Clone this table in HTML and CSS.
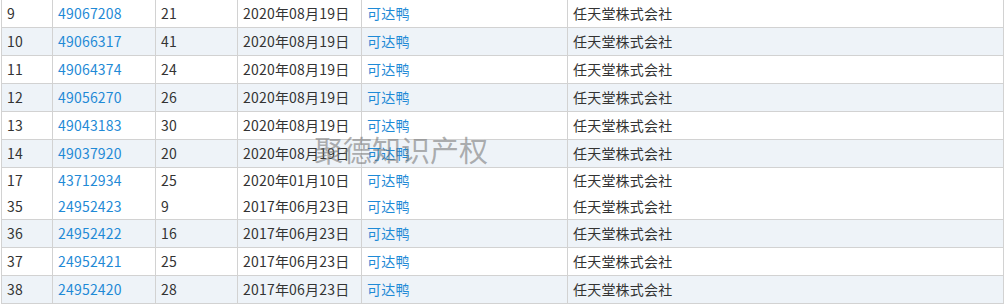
FILE: index.html
```html
<!DOCTYPE html>
<html lang="zh-CN">
<head>
<meta charset="utf-8">
<title>商标列表</title>
<link rel="stylesheet" href="styles.css">
</head>
<body>
<div class="wrap">
<table class="tm-table">
  <colgroup>
    <col class="c-no"><col class="c-reg"><col class="c-cls"><col class="c-date"><col class="c-name"><col class="c-owner">
  </colgroup>
  <tbody>
    <tr><td>9</td><td><a href="#">49067208</a></td><td>21</td><td>2020年08月19日</td><td><a href="#">可达鸭</a></td><td>任天堂株式会社</td></tr>
    <tr class="alt"><td>10</td><td><a href="#">49066317</a></td><td>41</td><td>2020年08月19日</td><td><a href="#">可达鸭</a></td><td>任天堂株式会社</td></tr>
    <tr><td>11</td><td><a href="#">49064374</a></td><td>24</td><td>2020年08月19日</td><td><a href="#">可达鸭</a></td><td>任天堂株式会社</td></tr>
    <tr class="alt"><td>12</td><td><a href="#">49056270</a></td><td>26</td><td>2020年08月19日</td><td><a href="#">可达鸭</a></td><td>任天堂株式会社</td></tr>
    <tr><td>13</td><td><a href="#">49043183</a></td><td>30</td><td>2020年08月19日</td><td><a href="#">可达鸭</a></td><td>任天堂株式会社</td></tr>
    <tr class="alt"><td>14</td><td><a href="#">49037920</a></td><td>20</td><td>2020年08月19日</td><td><a href="#">可达鸭</a></td><td>任天堂株式会社</td></tr>
    <tr class="double">
      <td><div>17</div><div>35</div></td>
      <td><div><a href="#">43712934</a></div><div><a href="#">24952423</a></div></td>
      <td><div>25</div><div>9</div></td>
      <td><div>2020年01月10日</div><div>2017年06月23日</div></td>
      <td><div><a href="#">可达鸭</a></div><div><a href="#">可达鸭</a></div></td>
      <td><div>任天堂株式会社</div><div>任天堂株式会社</div></td>
    </tr>
    <tr class="alt"><td>36</td><td><a href="#">24952422</a></td><td>16</td><td>2017年06月23日</td><td><a href="#">可达鸭</a></td><td>任天堂株式会社</td></tr>
    <tr><td>37</td><td><a href="#">24952421</a></td><td>25</td><td>2017年06月23日</td><td><a href="#">可达鸭</a></td><td>任天堂株式会社</td></tr>
    <tr class="alt"><td>38</td><td><a href="#">24952420</a></td><td>28</td><td>2017年06月23日</td><td><a href="#">可达鸭</a></td><td>任天堂株式会社</td></tr>
  </tbody>
</table>
<div class="watermark">聚德知识产权</div>
</div>
</body>
</html>
```

FILE: styles.css
```css
html, body {
  margin: 0;
  padding: 0;
  background: #ffffff;
}

.wrap {
  position: relative;
  width: 1004px;
  height: 304px;
  overflow: hidden;
}

.tm-table {
  border-collapse: collapse;
  table-layout: fixed;
  width: 1002px;
  margin: -1px 0 0 1px;
  font-family: "Noto Sans CJK SC", "Liberation Sans", sans-serif;
  font-size: 14px;
  color: #333333;
}

.c-no { width: 51px; }
.c-reg { width: 103px; }
.c-cls { width: 82px; }
.c-date { width: 124px; }
.c-name { width: 206px; }
.c-owner { width: 436px; }

.tm-table td {
  border: 1px solid #d2d2d2;
  padding: 0 5px;
  height: 27px;
  line-height: 27px;
  white-space: nowrap;
  text-align: left;
  vertical-align: middle;
  letter-spacing: 0.2px;
}

.tm-table tr.alt td {
  background: #eef3f8;
}

.tm-table tr.double td {
  height: 51px;
  line-height: 25.5px;
}

.tm-table a {
  color: #1f8ad6;
  text-decoration: none;
}

.watermark {
  position: absolute;
  left: 314px;
  top: 129px;
  font-family: "Noto Sans CJK SC", sans-serif;
  font-size: 29px;
  font-weight: 400;
  line-height: 40px;
  color: rgba(110, 110, 110, 0.55);
  pointer-events: none;
}
```
